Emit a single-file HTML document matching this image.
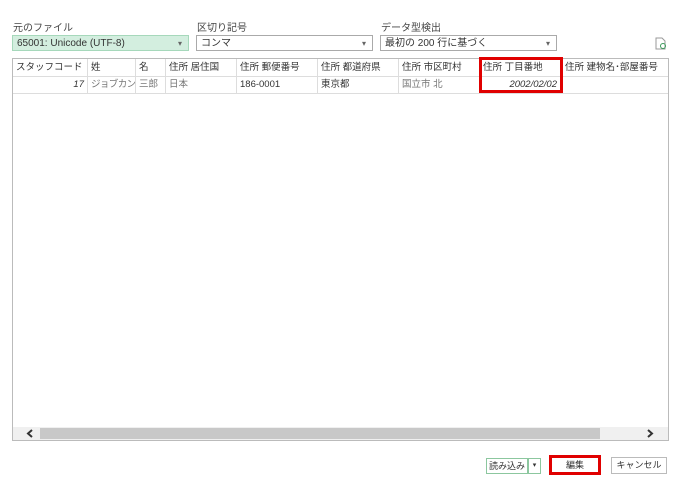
<!DOCTYPE html><html><head><meta charset="utf-8"><style>
body{margin:0;width:679px;height:484px;background:#fff;font-family:"Liberation Sans","Noto Sans CJK JP",sans-serif;font-size:10px;color:#333;position:relative;overflow:hidden}
.a{position:absolute}
.lbl{font-size:10px;color:#444}
.dd{border:1px solid #aaa;height:16px;line-height:15px;padding-left:4px;box-sizing:border-box;font-size:10px}
.dd:after{content:"▾";position:absolute;right:6px;top:0;font-size:8px;color:#666}
.c{position:absolute;height:17px;line-height:17px;padding-left:3px;box-sizing:border-box;border-right:1px solid #ddd;white-space:nowrap;overflow:hidden}
.btn{border:1px solid #bbb;height:16px;line-height:14px;text-align:center;box-sizing:border-box;font-size:9px;background:#fff}
</style></head><body>
<div class="a lbl" style="left:13px;top:19px">元のファイル</div>
<div class="a lbl" style="left:197px;top:19px">区切り記号</div>
<div class="a lbl" style="left:381px;top:19px">データ型検出</div>
<div class="a dd" style="left:12px;top:35px;width:177px;background:#d3eedf;border-color:#a6d8bb">65001: Unicode (UTF-8)</div>
<div class="a dd" style="left:196px;top:35px;width:177px">コンマ</div>
<div class="a dd" style="left:380px;top:35px;width:177px">最初の 200 行に基づく</div>
<svg class="a" style="left:655px;top:37px" width="12" height="13" viewBox="0 0 12 13"><path d="M1 1h6l3 3v8H1z" fill="none" stroke="#999"/><circle cx="8" cy="9" r="2.5" fill="none" stroke="#3a9a5a"/></svg>
<div class="a" style="left:12px;top:58px;width:657px;height:383px;border:1px solid #bbb;box-sizing:border-box"></div>
<div class="a" style="left:13px;top:59px;width:655px;height:17px;border-bottom:1px solid #ddd;color:#333;font-size:9.5px">
<div class="c" style="left:0;width:75px">スタッフコード</div>
<div class="c" style="left:75px;width:48px">姓</div>
<div class="c" style="left:123px;width:30px">名</div>
<div class="c" style="left:153px;width:71px">住所 居住国</div>
<div class="c" style="left:224px;width:81px">住所 郵便番号</div>
<div class="c" style="left:305px;width:81px">住所 都道府県</div>
<div class="c" style="left:386px;width:81px">住所 市区町村</div>
<div class="c" style="left:467px;width:82px">住所 丁目番地</div>
<div class="c" style="left:549px;width:106px;border:none">住所 建物名･部屋番号</div>
</div>
<div class="a" style="left:13px;top:76px;width:655px;height:17px;border-bottom:1px solid #ddd;font-size:9.5px">
<div class="c" style="left:0;width:75px;text-align:right;padding-right:3px;font-style:italic">17</div>
<div class="c" style="left:75px;width:48px;color:#777;letter-spacing:-0.6px">ジョブカン</div>
<div class="c" style="left:123px;width:30px;color:#777">三郎</div>
<div class="c" style="left:153px;width:71px;color:#777">日本</div>
<div class="c" style="left:224px;width:81px">186-0001</div>
<div class="c" style="left:305px;width:81px">東京都</div>
<div class="c" style="left:386px;width:81px;color:#777">国立市 北</div>
<div class="c" style="left:467px;width:82px;text-align:right;padding-right:4px;font-style:italic">2002/02/02</div>
</div>
<div class="a" style="left:479px;top:57px;width:84px;height:36px;border:3px solid #e00000;box-sizing:border-box"></div>
<div class="a" style="left:13px;top:427px;width:655px;height:13px;background:#f0f0f0"></div>
<div class="a" style="left:40px;top:428px;width:560px;height:11px;background:#c8c8c8"></div>
<svg class="a" style="left:26px;top:429px" width="8" height="9"><path d="M6 1L2 4.5L6 8" fill="none" stroke="#333" stroke-width="2"/></svg>
<svg class="a" style="left:646px;top:429px" width="8" height="9"><path d="M2 1L6 4.5L2 8" fill="none" stroke="#333" stroke-width="2"/></svg>
<div class="a btn" style="left:486px;top:458px;width:42px;border-color:#8cc79f">読み込み</div>
<div class="a btn" style="left:528px;top:458px;width:13px;border-color:#8cc79f;font-size:7px">▾</div>
<div class="a btn" style="left:549px;top:455px;width:52px;height:20px;line-height:14px;border:3px solid #e00000">編集</div>
<div class="a btn" style="left:611px;top:457px;width:56px;height:17px">キャンセル</div>
</body></html>
